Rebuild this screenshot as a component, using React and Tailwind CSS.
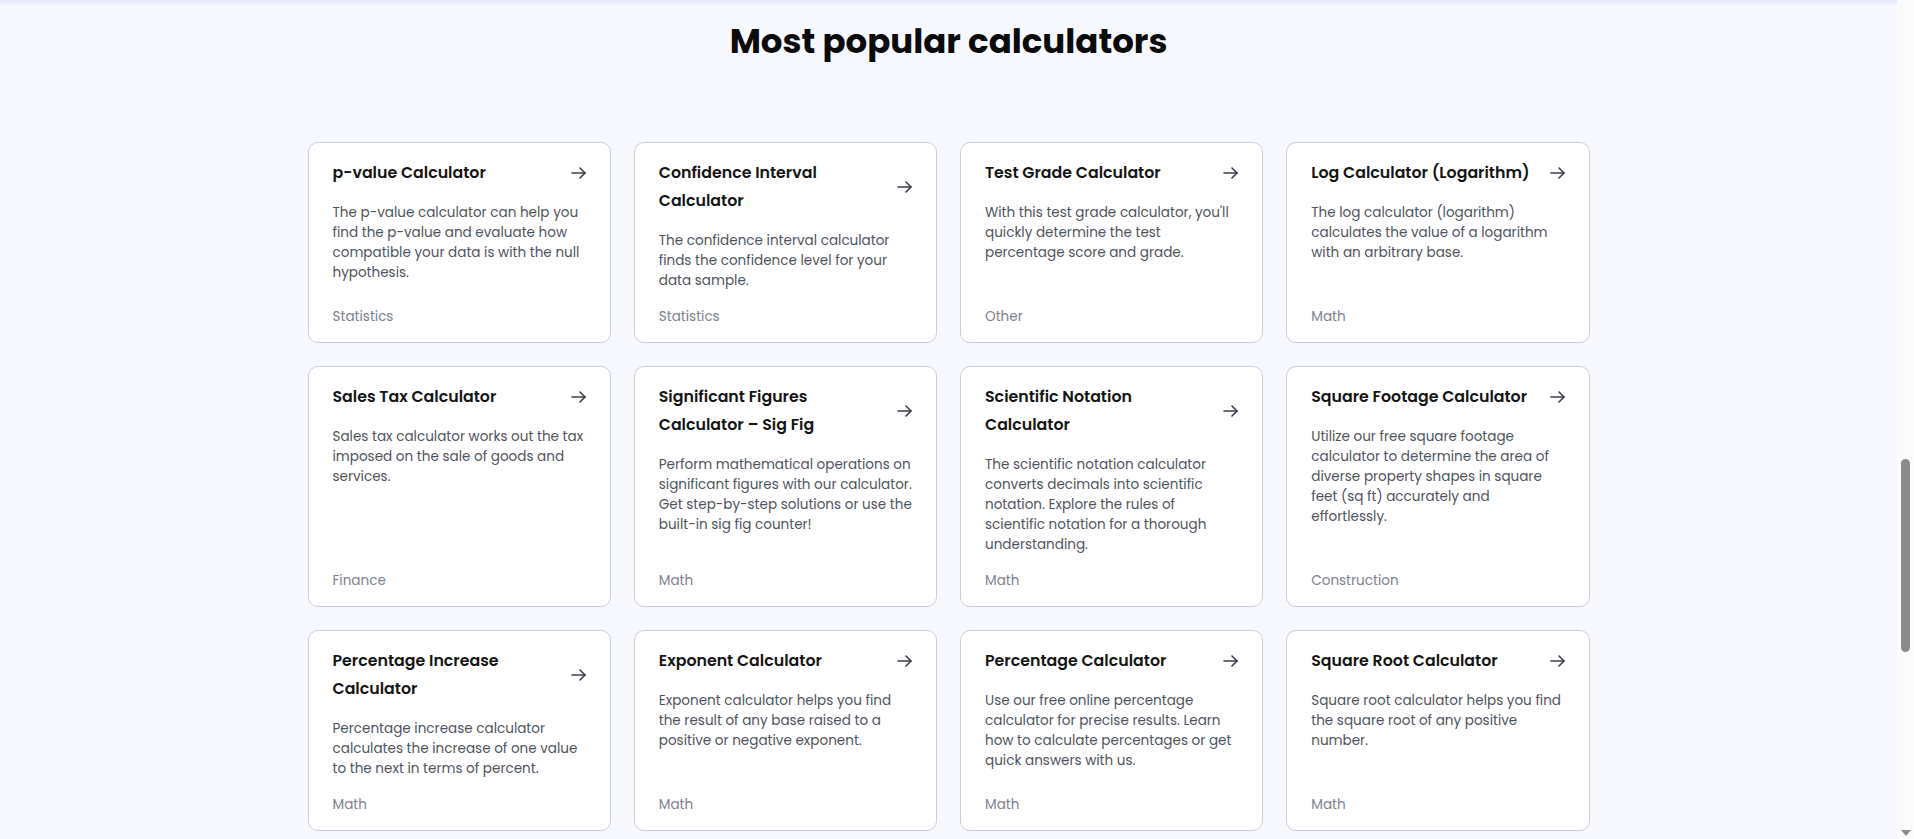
// Most popular calculators — grid of 12 cards, 4 per row.
import React from 'react'

const CALCULADORAS = [
  {
    titulo: 'p-value Calculator',
    texto: 'The p-value calculator can help you find the p-value and evaluate how compatible your data is with the null hypothesis.',
    categoria: 'Statistics',
  },
  {
    titulo: 'Confidence Interval Calculator',
    texto: 'The confidence interval calculator finds the confidence level for your data sample.',
    categoria: 'Statistics',
  },
  {
    titulo: 'Test Grade Calculator',
    texto: "With this test grade calculator, you'll quickly determine the test percentage score and grade.",
    categoria: 'Other',
  },
  {
    titulo: 'Log Calculator (Logarithm)',
    texto: 'The log calculator (logarithm) calculates the value of a logarithm with an arbitrary base.',
    categoria: 'Math',
  },
  {
    titulo: 'Sales Tax Calculator',
    texto: 'Sales tax calculator works out the tax imposed on the sale of goods and services.',
    categoria: 'Finance',
  },
  {
    titulo: 'Significant Figures Calculator – Sig Fig',
    texto: 'Perform mathematical operations on significant figures with our calculator. Get step-by-step solutions or use the built-in sig fig counter!',
    categoria: 'Math',
  },
  {
    titulo: 'Scientific Notation Calculator',
    texto: 'The scientific notation calculator converts decimals into scientific notation. Explore the rules of scientific notation for a thorough understanding.',
    categoria: 'Math',
  },
  {
    titulo: 'Square Footage Calculator',
    texto: 'Utilize our free square footage calculator to determine the area of diverse property shapes in square feet (sq ft) accurately and effortlessly.',
    categoria: 'Construction',
  },
  {
    titulo: 'Percentage Increase Calculator',
    texto: 'Percentage increase calculator calculates the increase of one value to the next in terms of percent.',
    categoria: 'Math',
  },
  {
    titulo: 'Exponent Calculator',
    texto: 'Exponent calculator helps you find the result of any base raised to a positive or negative exponent.',
    categoria: 'Math',
  },
  {
    titulo: 'Percentage Calculator',
    texto: 'Use our free online percentage calculator for precise results. Learn how to calculate percentages or get quick answers with us.',
    categoria: 'Math',
  },
  {
    titulo: 'Square Root Calculator',
    texto: 'Square root calculator helps you find the square root of any positive number.',
    categoria: 'Math',
  },
]

// Flecha fina, cabeza más baja que el ancho del asta.
function Flecha() {
  return (
    <svg
      width="15"
      height="12"
      viewBox="0 0 15 12"
      fill="none"
      stroke="currentColor"
      strokeWidth="1.6"
      strokeLinecap="round"
      strokeLinejoin="round"
      className="shrink-0 text-[#3a3e4b]"
      aria-hidden
    >
      <path d="M1 6h13" />
      <path d="M9 1l5 5-5 5" />
    </svg>
  )
}

function Tarjeta({ titulo, texto, categoria }) {
  return (
    <a
      href="#"
      className="flex flex-col rounded-[10px] border border-[#cbcedb] bg-white px-6 pt-4 pb-[15px] hover:border-[#9aa0b5]"
    >
      <div className="flex items-center justify-between gap-4">
        <h3 className="text-[15.8px] font-semibold leading-7 text-[#141414]">{titulo}</h3>
        <Flecha />
      </div>
      <p className="mt-4 text-[13.55px] leading-5 text-[#4f535e]">{texto}</p>
      <span className="mt-auto pt-4 text-[13.55px] leading-5 text-[#7c8191]">{categoria}</span>
    </a>
  )
}

// Barra de scroll clásica del navegador (la página está desplazada hacia abajo).
function BarraScroll() {
  return (
    <div className="fixed inset-y-0 right-0 flex w-[17px] flex-col items-center bg-[#fbfbfb]">
      <div className="mt-[459px] h-[193px] w-[9px] rounded-full bg-[#8b8b8b]" />
      <div className="mt-auto mb-[3px] h-0 w-0 border-x-[5px] border-t-[6px] border-x-transparent border-t-[#8b8b8b]" />
    </div>
  )
}

export default function App() {
  return (
    <div className="min-h-screen bg-[#f7f8fe] pr-[17px] pb-24 font-['Poppins','Open_Sans',sans-serif]">
      {/* sombra del header fijo, fuera de la vista */}
      <div className="pointer-events-none fixed inset-x-0 top-0 h-[6px] bg-gradient-to-b from-[#e2e6f7] to-transparent" />

      <h2 className="pt-[20px] text-center text-[34px] font-bold leading-[42px] text-[#0b0b0b]">
        Most popular calculators
      </h2>

      <div className="mx-auto mt-[80px] grid w-[1282px] grid-cols-4 gap-x-[23px] gap-y-[23px]">
        {CALCULADORAS.map((c) => (
          <Tarjeta key={c.titulo} {...c} />
        ))}
      </div>

      <BarraScroll />
    </div>
  )
}
